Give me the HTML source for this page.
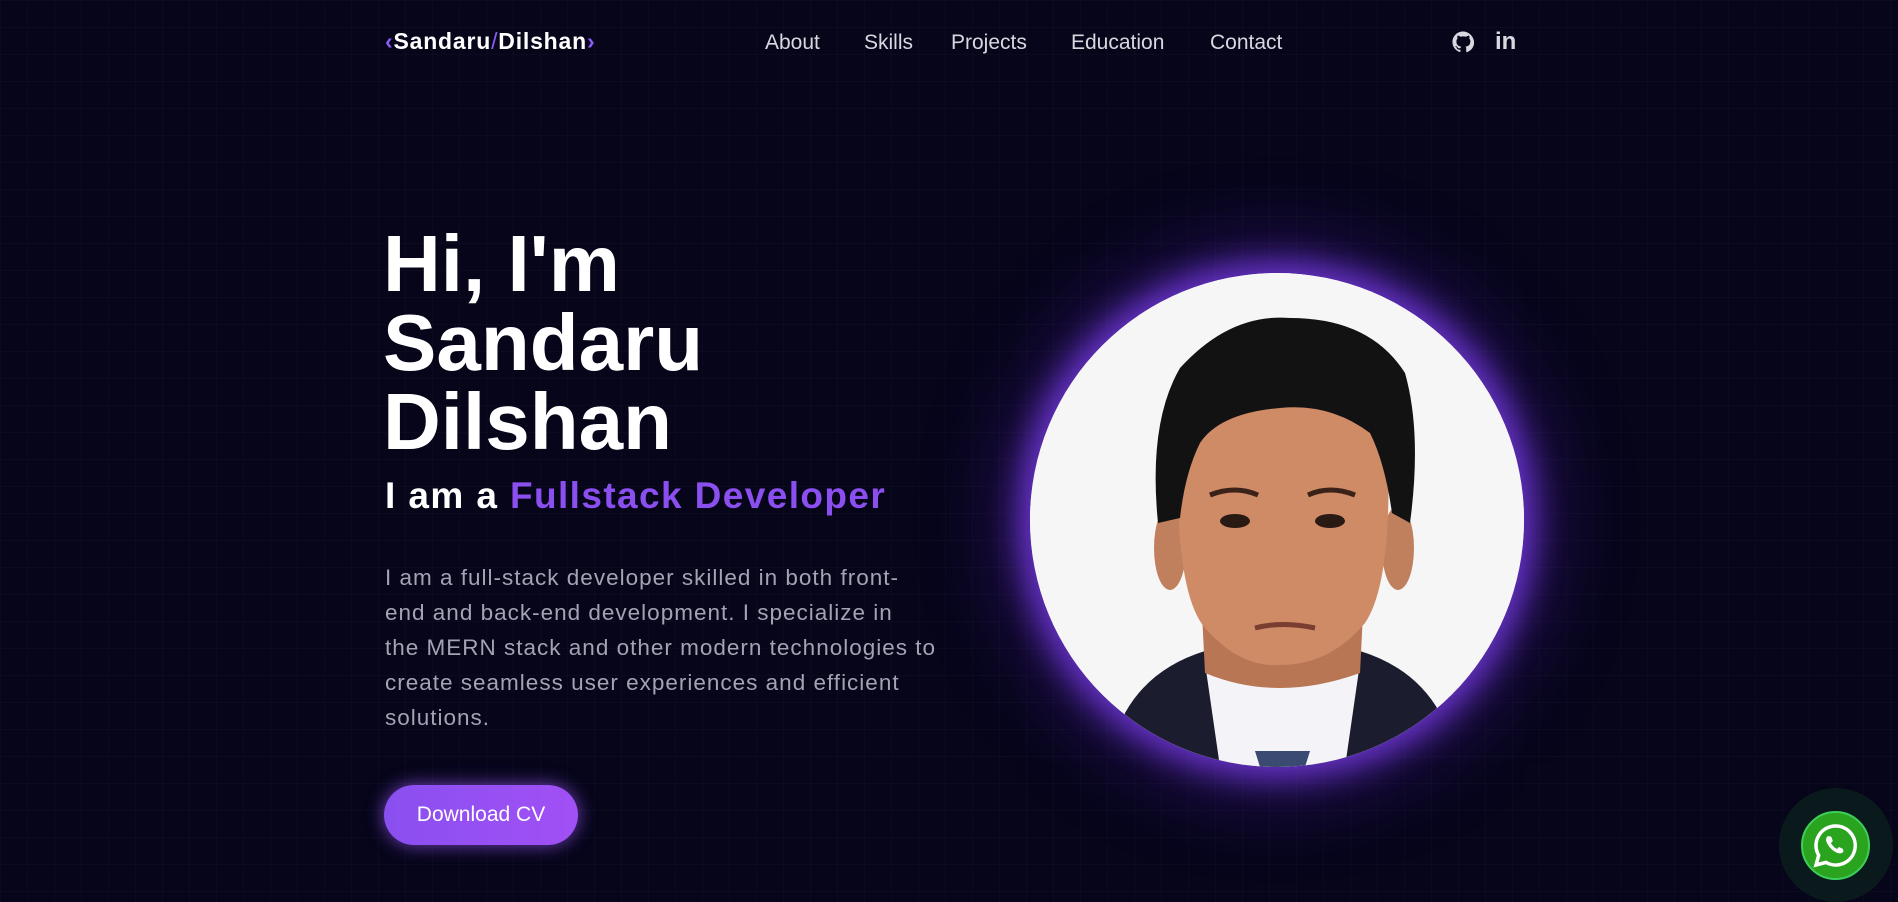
<!DOCTYPE html>
<html><head><meta charset="utf-8"><style>
*{margin:0;padding:0;box-sizing:border-box}
html,body{width:1898px;height:902px;overflow:hidden}
body{background:#06051a;font-family:"Liberation Sans",sans-serif;position:relative;
background-image:linear-gradient(rgba(255,255,255,0.02) 1px,transparent 1px),linear-gradient(90deg,rgba(255,255,255,0.02) 1px,transparent 1px);
background-size:27px 27px}
.abs{position:absolute;white-space:nowrap}
.logo{left:385px;top:28px;font-size:23px;font-weight:bold;color:#fff;letter-spacing:0.8px}
.logo .p{color:#8b5cf6}
.nav{top:31px;font-size:21px;color:#d8d8e0}
h1{position:absolute;left:383px;top:224px;font-size:80px;line-height:79px;font-weight:bold;color:#fff;letter-spacing:0px}
.sub{left:385px;top:474px;font-size:37px;line-height:44px;font-weight:bold;color:#fff;letter-spacing:1.4px}
.sub span{color:#8b4ff0}
.para{left:385px;top:560px;font-size:22.5px;line-height:35px;color:#a3a3b3;letter-spacing:1px}
.btn{left:384px;top:785px;width:194px;height:60px;border-radius:30px;background:linear-gradient(90deg,#8a4ff0,#a150f5);color:#fff;font-size:21px;text-align:center;line-height:60px;box-shadow:0 0 18px rgba(160,90,255,0.7)}
.photo{left:1030px;top:273px;width:494px;height:494px;border-radius:50%;overflow:hidden;background:#f5f5f5;box-shadow:0 0 30px 12px rgba(120,60,230,0.8),0 0 80px 30px rgba(100,40,200,0.35)}
.wa-o{left:1779px;top:788px;width:114px;height:114px;border-radius:50%;background:#0a1a1c}
.wa-i{left:1801px;top:811px;width:69px;height:69px;border-radius:50%;background:#2aa31f;border:2px solid #3ccf5a}
</style></head><body>
<div class="abs logo"><span class="p">‹</span>Sandaru<span class="p" style="font-weight:normal">/</span>Dilshan<span class="p">›</span></div>
<div class="abs nav" style="left:765px">About</div>
<div class="abs nav" style="left:864px">Skills</div>
<div class="abs nav" style="left:951px">Projects</div>
<div class="abs nav" style="left:1071px">Education</div>
<div class="abs nav" style="left:1210px">Contact</div>
<svg class="abs" style="left:1452px;top:31px" width="22" height="22" viewBox="0 0 24 24"><path fill="#d8d8e0" d="M12 .5C5.6.5.5 5.6.5 12c0 5.1 3.3 9.4 7.9 10.9.6.1.8-.3.8-.6v-2c-3.2.7-3.900-1.5-3.900-1.5-.5-1.3-1.3-1.7-1.3-1.7-1-.7.1-.7.1-.7 1.2.1 1.8 1.2 1.8 1.2 1 1.8 2.800 1.3 3.500 1 .1-.8.4-1.3.7-1.6-2.6-.3-5.3-1.3-5.3-5.700 0-1.3.5-2.3 1.2-3.100-.1-.3-.5-1.5.1-3.100 0 0 1-.3 3.300 1.200 1-.3 2-.4 3-.4s2 .1 3 .4c2.3-1.5 3.3-1.2 3.3-1.2.7 1.6.2 2.8.1 3.1.8.8 1.2 1.9 1.2 3.1 0 4.4-2.7 5.4-5.3 5.7.4.4.8 1.1.8 2.2v3.3c0 .3.2.7.8.6 4.6-1.5 7.9-5.8 7.9-10.9C23.5 5.6 18.4.5 12 .5z"/></svg>
<div class="abs" style="left:1495px;top:28px;font-size:24px;font-weight:bold;color:#d8d8e0">in</div>
<h1>Hi, I'm<br>Sandaru<br>Dilshan</h1>
<div class="abs sub">I am a <span>Fullstack Developer</span></div>
<div class="abs para">I am a full-stack developer skilled in both front-<br>end and back-end development. I specialize in<br>the MERN stack and other modern technologies to<br>create seamless user experiences and efficient<br>solutions.</div>
<div class="abs btn">Download CV</div>
<div class="abs photo"><svg width="494" height="494" viewBox="0 0 494 494">
<rect width="494" height="494" fill="#f6f6f6"/>
<path d="M80 494 L95 440 Q120 395 175 378 L330 378 Q385 395 410 440 L430 494Z" fill="#1b1d2e"/>
<path d="M175 390 L330 390 L315 494 L190 494Z" fill="#f4f4f8"/>
<path d="M225 478 L280 478 L275 494 L230 494Z" fill="#3a4a70"/>
<path d="M170 300 L175 400 Q247 430 330 400 L335 300Z" fill="#b87655"/>
<ellipse cx="140" cy="275" rx="16" ry="42" fill="#c0805e"/>
<ellipse cx="368" cy="275" rx="16" ry="42" fill="#c0805e"/>
<path d="M148 180 Q145 320 175 355 Q210 395 250 392 Q300 392 335 350 Q362 310 358 180 Q330 110 250 110 Q175 110 148 180Z" fill="#cf8a66"/>
<path d="M128 250 Q118 150 150 95 Q200 40 260 45 Q340 45 375 100 Q392 160 380 250 L362 240 Q355 190 340 160 Q300 130 250 135 Q190 140 170 170 Q155 200 150 245Z" fill="#131212"/>
<ellipse cx="205" cy="248" rx="15" ry="7" fill="#2a1a14"/>
<ellipse cx="300" cy="248" rx="15" ry="7" fill="#2a1a14"/>
<path d="M180 222 Q205 212 228 222" stroke="#3a2218" stroke-width="5" fill="none"/>
<path d="M278 222 Q300 212 325 222" stroke="#3a2218" stroke-width="5" fill="none"/>
<path d="M225 355 Q252 348 285 355" stroke="#7a3e30" stroke-width="5" fill="none"/>
</svg></div>
<div class="abs wa-o"></div>
<div class="abs wa-i"><svg width="65" height="65" viewBox="0 0 65 65"><path d="M32.5 13a19.5 19.5 0 0 0-16.8 29.4L13 52l10-2.6A19.5 19.5 0 1 0 32.5 13z" fill="none" stroke="#fff" stroke-width="3.5"/><path d="M25 23c-1.5 1-2.5 3-1.5 6 1.5 4 6 9 11 11 3 1 5 0 6-1.5l-.5-2.5-4-2-2 2c-2-1-5-3.5-6-6l1.8-2-1.5-4.3z" fill="#fff"/></svg></div>
</body></html>
